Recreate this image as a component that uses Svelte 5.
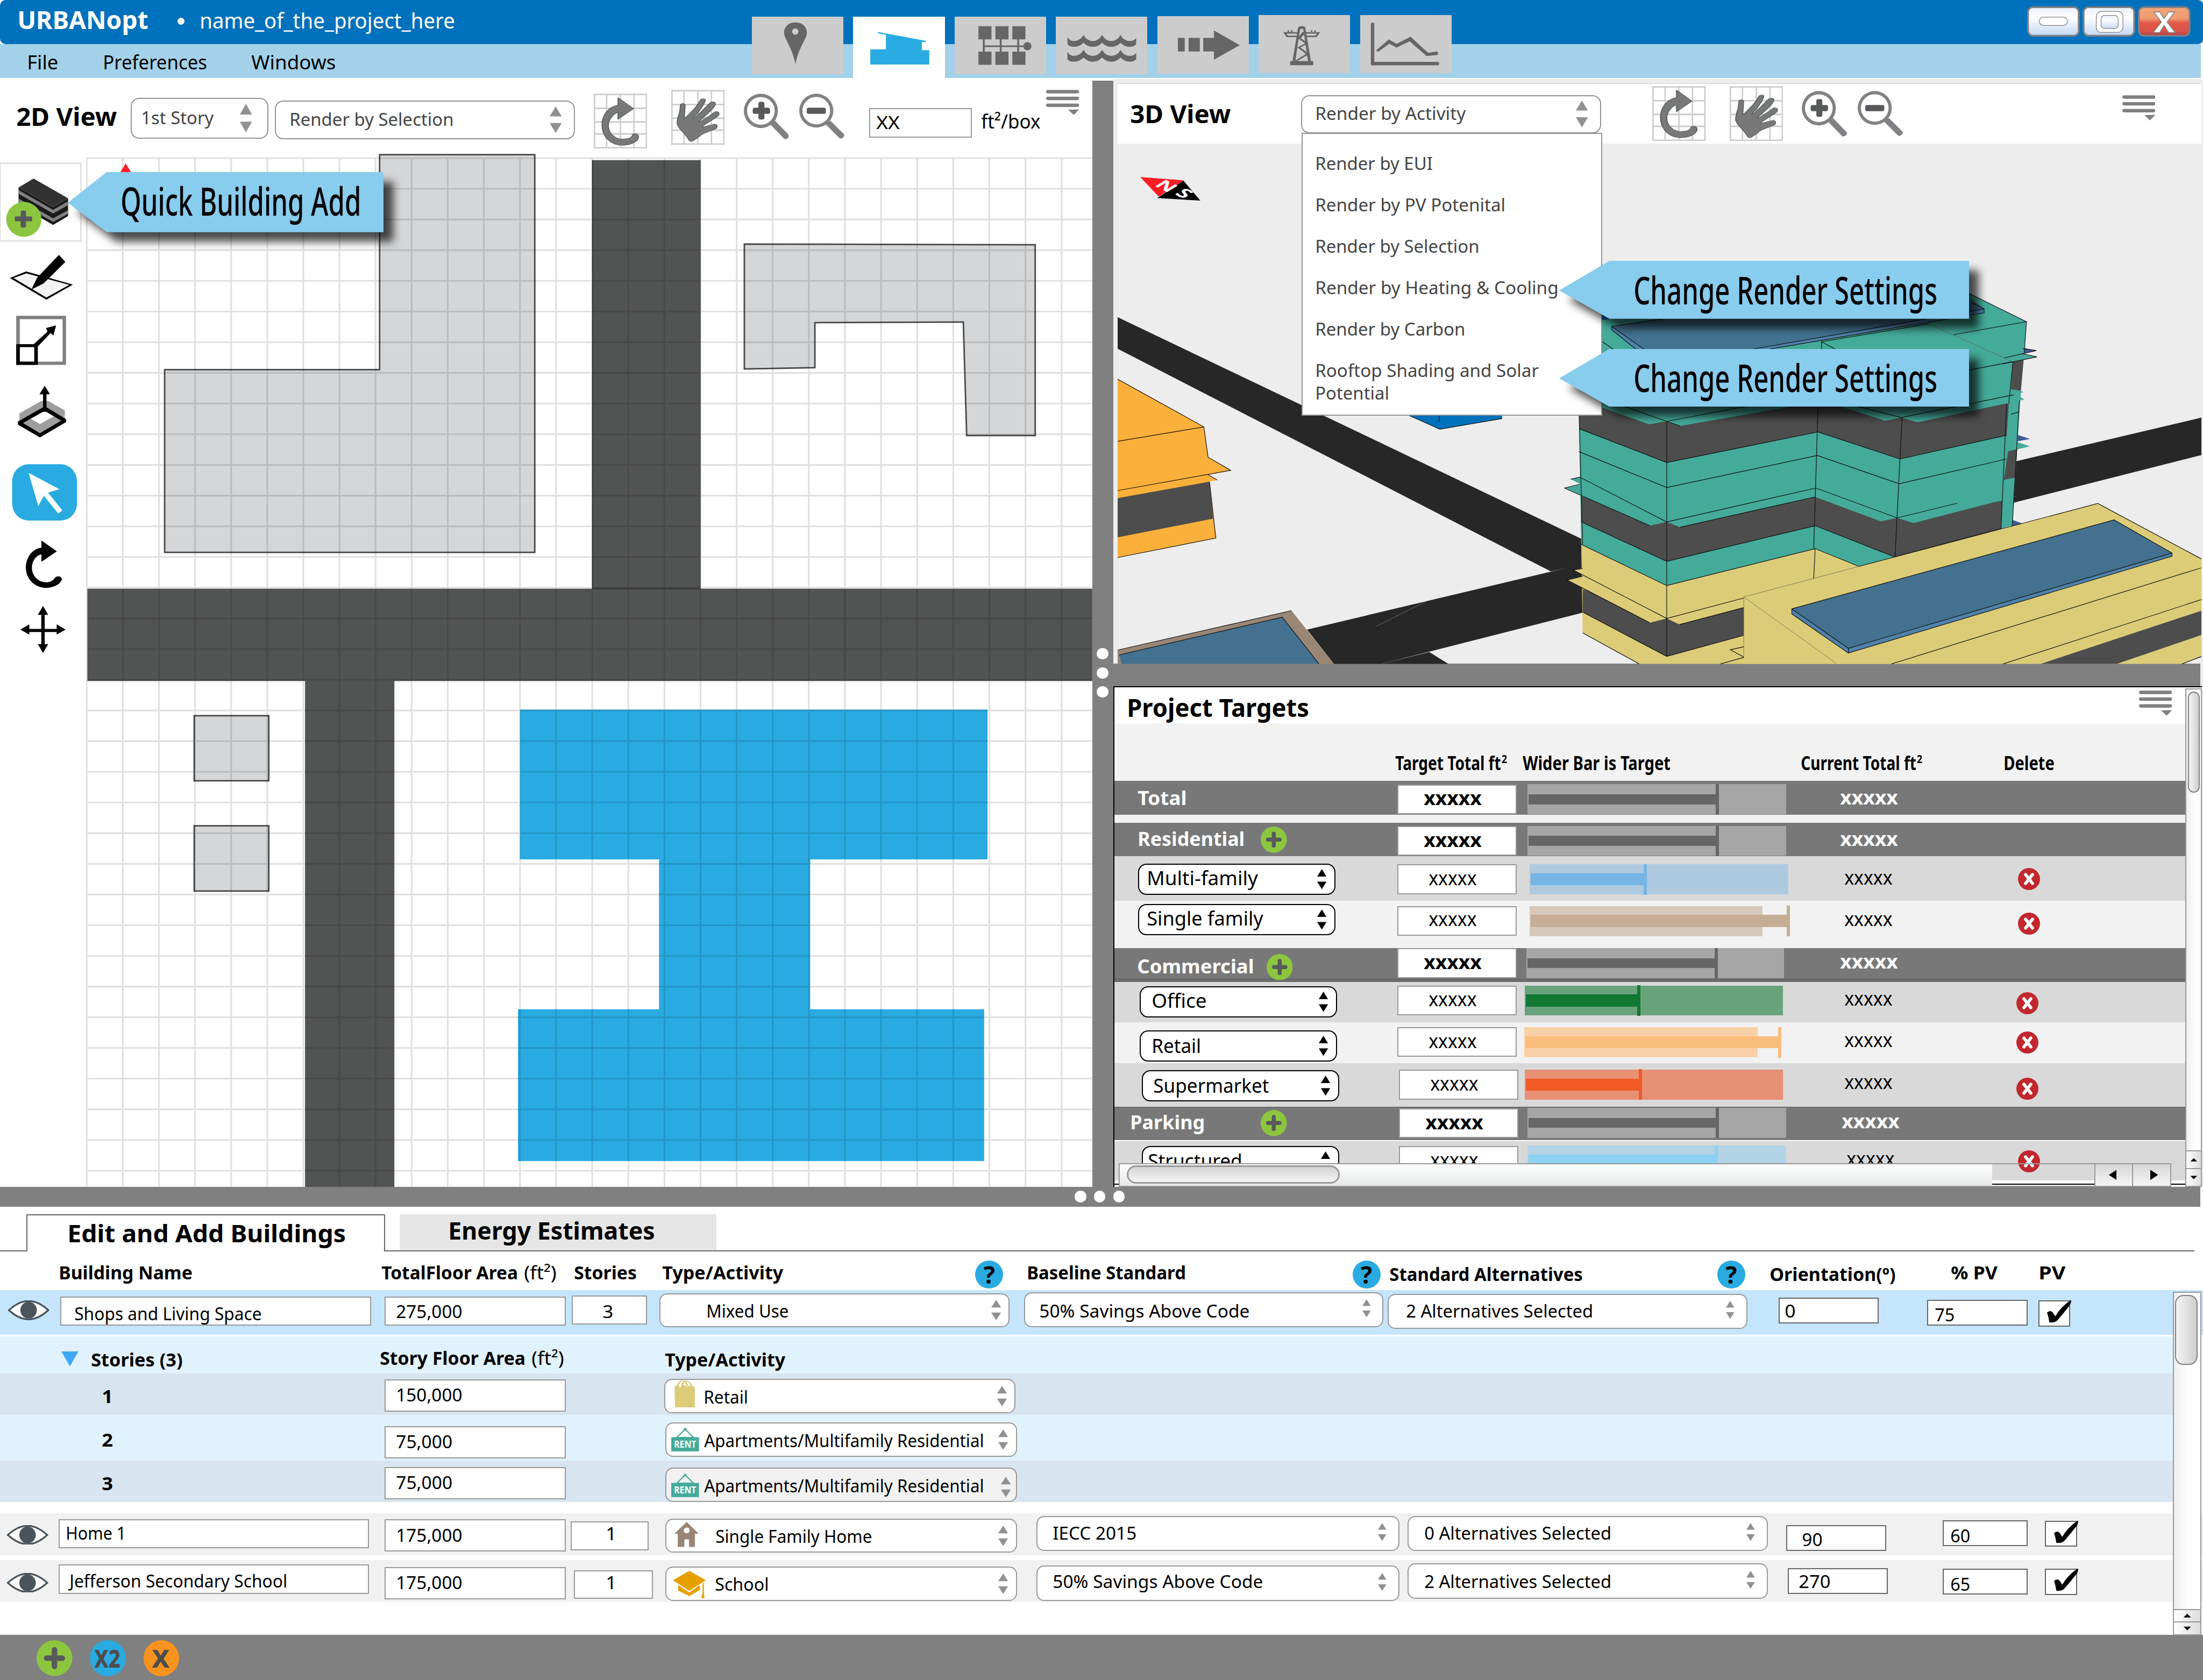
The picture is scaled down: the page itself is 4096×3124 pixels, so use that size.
<script>
  // Stretches a label to the given width so its metrics are independent of the installed font.
  function fit(node, width) {
    const root = node.closest('.app');
    const k = root.getBoundingClientRect().width / 1568;
    const natural = node.getBoundingClientRect().width / k;
    const target = width + 1.2;
    node.style.transform = `translateX(-0.3px) scaleX(${target / natural})`;
    node.style.marginRight = `${target - natural}px`;
  }

  const gridX = Array.from({ length: 28 }, (_, i) => 6 + i * 53.75);
  const gridY = Array.from({ length: 34 }, (_, i) => 20 + i * 45.68);
  const gridPath =
    gridX.map((x) => `M${x} 19V1552`).join('') + gridY.map((y) => `M5 ${y}H1503`).join('');

  const renderModes = [
    ['Render by EUI', 82.5],
    ['Render by PV Potenital', 134.3],
    ['Render by Selection', 115.7],
    ['Render by Heating & Cooling', 172],
    ['Render by Carbon', 105.7]
  ];

  const targets = [
    { id: 'total', head: 'Total', w: 33.8, bar: [184, 134, 'gray'] },
    { id: 'residential', head: 'Residential', w: 75, add: true, bar: [184, 134, 'gray'] },
    { id: 'multi', pick: 'Multi-family', w: 77.9, bar: [184.2, 81.5, 'sky'] },
    { id: 'single', pick: 'Single family', w: 81.7, bar: [166, 183, 'tan'] },
    { id: 'commercial', head: 'Commercial', w: 82, add: true, bar: [183.6, 134, 'gray'] },
    { id: 'office', pick: 'Office', w: 38, bar: [183.8, 80.3, 'green'] },
    { id: 'retail', pick: 'Retail', w: 34, bar: [166.2, 180.7, 'peach'] },
    { id: 'super', pick: 'Supermarket', w: 81.2, bar: [183.8, 81.3, 'red'] },
    { id: 'parking', head: 'Parking', w: 52, add: true, bar: [184, 134, 'gray'] },
    { id: 'structured', pick: 'Structured', w: 66, bar: [184, 133, 'aqua'] }
  ];

  const buildings = [
    {
      id: 'shops',
      name: ['Shops and Living Space', 132.2],
      area: ['275,000', 46],
      stories: '3',
      type: ['Mixed Use', 57.5],
      base: ['50% Savings Above Code', 148.6],
      alt: ['2 Alternatives Selected', 132],
      orient: ['0', 6.6],
      pv: ['75', 13],
      floors: [
        { id: 'f1', n: '1', area: ['150,000', 46], icon: 'bag', type: ['Retail', 30.5] },
        { id: 'f2', n: '2', area: ['75,000', 39], icon: 'rent', type: ['Apartments/Multifamily Residential', 198] },
        { id: 'f3', n: '3', area: ['75,000', 39], icon: 'rent', type: ['Apartments/Multifamily Residential', 198] }
      ]
    },
    {
      id: 'home',
      name: ['Home 1', 41.7],
      area: ['175,000', 46],
      stories: '1',
      icon: 'house',
      type: ['Single Family Home', 110.3],
      base: ['IECC 2015', 58.5],
      alt: ['0 Alternatives Selected', 132],
      orient: ['90', 13.5],
      pv: ['60', 13]
    },
    {
      id: 'school',
      name: ['Jefferson Secondary School', 153.8],
      area: ['175,000', 46],
      stories: '1',
      icon: 'cap',
      type: ['School', 37.2],
      base: ['50% Savings Above Code', 148.6],
      alt: ['2 Alternatives Selected', 132],
      orient: ['270', 21.5],
      pv: ['65', 13]
    }
  ];
</script>

{#snippet label(text, width)}<span class="fit" use:fit={width}>{text}</span>{/snippet}

{#snippet value(pair)}{@render label(pair[0], pair[1])}{/snippet}

{#snippet arrows()}
  <svg class="arrows" viewBox="0 0 10 24" preserveAspectRatio="none"><path d="M0 9L5 0L10 9ZM0 15H10L5 24Z" /></svg>
{/snippet}

{#snippet plus(cls)}
  <svg class="plus {cls}" viewBox="0 0 20 20">
    <circle cx="10" cy="10" r="10" fill="#8cc63f" />
    <path d="M5.6 10H14.4M10 5.4V14.6" stroke="#58595b" stroke-width="3.1" stroke-linecap="round" />
  </svg>
{/snippet}

{#snippet menuIcon()}
  <svg class="menuicon" viewBox="1374 654 93 184" preserveAspectRatio="none" fill="#808080">
    <rect x="1374" y="655" width="93" height="25" rx="5" ry="12" />
    <rect x="1374" y="704" width="93" height="25" rx="5" ry="12" />
    <rect x="1374" y="754" width="93" height="25" rx="5" ry="12" />
    <path d="M1436 799L1467 797L1452 837Z" />
  </svg>
{/snippet}

{#snippet viewTools()}
  <svg class="rotate" viewBox="102 679 150 400" preserveAspectRatio="none">
    <path d="M104 679V1079M138 679V1079M177 679V1079M215 679V1079M250 679V1079" stroke="#ccc" stroke-width="4" />
    <path d="M102 685H252M102 786H252M102 885H252M102 972H252M102 1073H252" stroke="#ccc" stroke-width="11" />
    <path class="glyph" d="M170 708L214 788L170 866L170 815C155 830 143 870 143 910C143 965 160 1008 182 1008C200 1008 209 1000 211 978C214 965 226 965 228 990C228 1030 205 1055 182 1055C148 1055 125 990 125 905C125 835 143 775 170 762Z" />
  </svg>
  <svg class="hand" viewBox="319 654 150 400" preserveAspectRatio="none">
    <path d="M321 654V1054M355 654V1054M394 654V1054M432 654V1054M467 654V1054" stroke="#ccc" stroke-width="4" />
    <path d="M319 660H469M319 761H469M319 860H469M319 947H469M319 1048H469" stroke="#ccc" stroke-width="11" />
    <path class="glyph" d="M375 1030C370 1030 368 1015 364 1000C355 965 340 940 336 905C334 880 338 850 342 820C344 800 344 775 345 762C347 750 357 752 358 765C358 800 356 830 356 860C362 850 370 830 375 815C385 790 395 755 401 727C404 714 416 716 415 730C411 765 400 800 393 825C385 845 381 855 380 860C385 858 392 840 400 820C410 795 420 770 428 748C434 735 444 742 443 758C440 785 425 820 412 850C404 868 398 880 397 888C405 880 415 860 425 845C434 830 440 812 445 811C455 812 455 832 450 845C440 868 425 885 415 905C409 915 407 918 408 924C415 918 430 910 440 903C449 902 449 920 446 935C435 950 420 960 408 975C398 990 385 1025 375 1030Z" />
  </svg>
  <svg class="zin" viewBox="523 680 127 333" preserveAspectRatio="none" fill="#808184">
    <path fill-rule="evenodd" d="M523 806a48 125 0 1 0 96 0a48 125 0 1 0 -96 0ZM532 806a39 101 0 1 0 78 0a39 101 0 1 0 -78 0Z" />
    <path d="M597 903L611 877L650 982C650 1000 646 1014 637 1010Z" />
    <g fill="#58595b"><rect x="548" y="783" width="49" height="45" rx="6" ry="14" /><rect x="564" y="740" width="17" height="129" rx="6" ry="14" /></g>
  </svg>
  <svg class="zout" viewBox="679 680 127 333" preserveAspectRatio="none" fill="#808184">
    <path fill-rule="evenodd" d="M679 804a48 123 0 1 0 96 0a48 123 0 1 0 -96 0ZM688 804a39 100 0 1 0 78 0a39 100 0 1 0 -78 0Z" />
    <path d="M753 903L767 877L806 978C806 996 801 1010 793 1006Z" />
    <rect x="700" y="783" width="54" height="45" rx="6" ry="14" fill="#58595b" />
  </svg>
{/snippet}

{#snippet typeIcon(kind)}
  {#if kind === 'bag'}
    <svg class="ticon bag" viewBox="1025 610 32 90" preserveAspectRatio="none">
      <path d="M1025 633L1029 625L1034 633L1039 625L1044 633L1050 627L1056 633V698H1026Z" fill="#dccc78" />
      <path d="M1030 631C1032 606 1042 606 1045 631M1036 631C1038 606 1048 610 1051 631" fill="none" stroke="#dccc78" stroke-width="2.4" />
    </svg>
  {:else if kind === 'rent'}
    <svg class="ticon rent" viewBox="0 0 20 17">
      <circle cx="10" cy="1.1" r="1" fill="#44aa99" />
      <path d="M10 1L4 7H16Z" fill="none" stroke="#44aa99" stroke-width="0.8" />
      <rect y="6.8" width="20" height="10.2" fill="#44aa99" />
      <text x="10" y="14.2" text-anchor="middle" textLength="16" lengthAdjust="spacingAndGlyphs">RENT</text>
    </svg>
  {:else if kind === 'house'}
    <svg class="ticon house" viewBox="1025 1065 37 80" preserveAspectRatio="none" fill="#998675">
      <path fill-rule="evenodd" d="M1043.500 1065L1062 1103H1056V1145H1047V1121H1040V1145H1030V1103H1025ZM1039 1092a4.500 9 0 1 0 9 0a4.500 9 0 1 0 -9 0Z" />
    </svg>
  {:else if kind === 'cap'}
    <svg class="ticon cap" viewBox="1022 1221 50 88" preserveAspectRatio="none" fill="#e6a000">
      <path d="M1047 1221L1072 1251L1047 1285L1022 1251Z" />
      <path d="M1030 1266L1047 1290L1063 1266V1282L1047 1302L1030 1284Z" />
      <path d="M1067 1262L1069 1258V1292L1070 1309H1065L1067 1292Z" />
    </svg>
  {/if}
{/snippet}

{#snippet help()}
  <span class="help">?</span>
{/snippet}

{#snippet vscroll(cls)}
  <div class="vscroll {cls}">
    <div class="vthumb"></div>
    <div class="vbtn"><svg viewBox="0 0 10 6"><path d="M1 5L5 1L9 5Z" /></svg></div>
    <div class="vbtn"><svg viewBox="0 0 10 6"><path d="M1 1L5 5L9 1Z" /></svg></div>
  </div>
{/snippet}

<div class="app">
  <header>
    <div class="titlebar">
      <b class="brand">{@render label('URBANopt', 92)}</b>
      <i class="dot"></i>
      <span class="project">{@render label('name_of_the_project_here', 180.5)}</span>
      <svg class="winbtns" viewBox="107 43 1194 225">
        <defs>
          <linearGradient id="glass" x2="0" y2="1"><stop offset="0" stop-color="#e8eefb" /><stop offset=".35" stop-color="#fff" /><stop offset="1" stop-color="#c3d7f4" /></linearGradient>
          <linearGradient id="close" x2="0" y2="1"><stop offset="0" stop-color="#f4a67c" /><stop offset=".4" stop-color="#ee9a70" /><stop offset=".55" stop-color="#e45748" /><stop offset=".85" stop-color="#d9534a" /><stop offset="1" stop-color="#b03a42" /></linearGradient>
        </defs>
        <g stroke="#808184" stroke-width="13">
          <rect x="116" y="52" width="369" height="208" rx="36" fill="url(#glass)" />
          <rect x="521" y="52" width="368" height="208" rx="36" fill="url(#glass)" />
          <rect x="923" y="52" width="369" height="208" rx="36" fill="url(#close)" />
        </g>
        <g stroke="#808080" stroke-width="5" fill="#fff">
          <rect x="198" y="125" width="205" height="60" rx="30" />
          <rect x="613" y="83" width="194" height="152" rx="36" />
          <rect x="648" y="112" width="124" height="96" rx="24" fill="url(#glass)" />
          <path stroke-width="6" d="M1031 87H1076L1107 135L1138 87H1184L1129 160L1188 237H1140L1107 186L1074 237H1027L1087 160Z" />
        </g>
      </svg>
    </div>
    <nav class="menubar">
      <span class="m1">{@render label('File', 21)}</span>
      <span class="m2">{@render label('Preferences', 73)}</span>
      <span class="m3">{@render label('Windows', 59)}</span>
    </nav>
    <div class="modes">
      <svg viewBox="59 120 188 418" preserveAspectRatio="none"><path fill-rule="evenodd" d="M148 162C135 162 125 190 125 240C127 290 142 350 148.500 465C154 350 170 290 172 240C172 190 162 162 148 162ZM141.500 228a6.500 23 0 1 0 13 0a6.500 23 0 1 0 -13 0Z" /></svg>
      <svg class="active" viewBox="267.500 120 188 451" preserveAspectRatio="none"><path d="M319 231L417 296V306L409 303V363H424V468H303V357H335V251L319 241Z" /></svg>
      <svg class="t3" viewBox="475 120 189 421" preserveAspectRatio="none">
        <path d="M524 190h27v96h-27ZM559 190h27v96h-27ZM594 190h27v96h-27ZM524 376h27v96h-27ZM559 376h27v96h-27ZM594 376h27v96h-27ZM533 286h4v90h-4ZM568 286h4v90h-4ZM604 286h4v90h-4ZM535 330h88v12h-88Z" />
        <ellipse cx="625" cy="336" rx="8.500" ry="30" />
      </svg>
      <svg viewBox="683 120 188 418" preserveAspectRatio="none">
        <path id="wave" d="M707 268Q712 297 720 297Q733 297 740 253Q747 297 759 297Q771 297 778 253Q785 297 797 297Q809 297 816 253Q822 297 835 297Q843 297 848 275V320Q843 339 835 339Q824 339 816 309Q808 339 797 339Q786 339 778 309Q770 339 759 339Q748 339 740 309Q732 339 720 339Q711 339 707 320Z" />
        <use href="#wave" y="108" />
      </svg>
      <svg class="t5" viewBox="890 117 188 421" preserveAspectRatio="none"><path d="M932 276h14v99h-14ZM954 276h23v99h-23ZM984 276H1006V221L1059 329L1006 435V375H984Z" /></svg>
      <svg class="t6" viewBox="1098 111 189 421" preserveAspectRatio="none">
        <rect x="1163" y="447" width="48" height="31" rx="3" ry="9" />
        <path d="M1179 212Q1179 192 1187 192Q1195 192 1195 212L1199 300L1206 447H1200L1194 300L1190 212H1184L1180 300L1174 447H1168L1175 300Z" />
        <path d="M1149 236H1180V247H1156L1158 261H1179V272H1156ZM1225 236H1194V247H1218L1216 261H1195V272H1218ZM1158 222h3v16h-3ZM1165 222h3v16h-3ZM1206 222h3v16h-3ZM1213 222h3v16h-3Z" />
        <path d="M1189 232L1194 245L1185 280L1201 318L1184 348L1203 395L1178 447H1172L1196 395L1178 348L1194 318L1179 280Z" />
      </svg>
      <svg class="t7" viewBox="1306 111 189 421" preserveAspectRatio="none">
        <rect x="1328" y="167" width="7" height="312" rx="3" ry="10" /><rect x="1328" y="453" width="141" height="26" rx="4" ry="12" />
        <path d="M1339 368L1365 289L1381 321L1410 269L1446 387L1464 377Q1469 388 1465 403L1443 411L1408 303L1381 349L1366 320L1345 375Q1341 383 1339 368Z" />
      </svg>
    </div>
  </header>

  <main>
    <section class="plan">
      <div class="toolbar two">
        <b class="title">{@render label('2D View', 70.5)}</b>
        <div class="select s1">{@render label('1st Story', 50.5)}{@render arrows()}</div>
        <div class="select s2">{@render label('Render by Selection', 115.7)}{@render arrows()}</div>
        {@render viewTools()}
        <div class="scale">{@render label('XX', 15.500)}</div>
        <span class="unit">{@render label('ft²/box', 41)}</span>
        {@render menuIcon()}
      </div>
      <div class="work">
        <div class="tools">
          <svg class="k1" viewBox="0 17 625 257" preserveAspectRatio="none">
            <path fill="#fff" stroke="#e0e0e0" stroke-width="5" d="M0 19.500H594M0 255.500H594" />
            <path stroke="#e0e0e0" stroke-width="11" d="M0 17V258M588 17V258" />
            <path fill="#1a1a1a" d="M135 93V146L386 207L495 180V126L386 153Z" />
            <path fill="#808080" d="M135 101L386 161L495 135V147L386 172L135 112ZM135 127L386 187L495 162V173L386 198L135 138Z" />
            <path fill="#323232" d="M244 66L495 126L386 153L135 93Z" />
            <ellipse cx="173" cy="190" rx="128" ry="53" fill="#8cc63f" />
            <path fill="#58595b" d="M112 181H150V168Q150 163 162 163H177Q189 163 189 168V181H228Q234 181 234 188.500T228 196H189V210Q189 215 177 215H162Q150 215 150 210V196H112Q107 196 107 188.500T112 181Z" />
          </svg>
          <svg class="k2" viewBox="0 274 625 183" preserveAspectRatio="none">
            <path d="M190 347L530 387L337 433L72 367ZM192 353L100 367L337 426L502 388Z" fill-rule="evenodd" />
            <path fill="#f3f3f3" d="M192 353L100 367L337 426L502 388Z" />
            <path d="M428 297L475 318L345 372L315 384L228 402L270 366Z" />
          </svg>
          <svg class="k3" viewBox="0 457 625 208" preserveAspectRatio="none">
            <path fill="#808080" fill-rule="evenodd" d="M118 482H480V631H118ZM144 492V621H455V492Z" />
            <path fill-rule="evenodd" d="M118 568H245L345 530L335 519L408 511L388 542L368 534L275 575V631H118ZM144 577V621H249V577Z" />
          </svg>
          <svg class="k4" viewBox="0 665 625 230" preserveAspectRatio="none">
            <path fill="#9e9e9e" d="M141 779L300 741H350L471 770V800L290 845L141 805Z" />
            <path fill="#fff" d="M222 795L315 773H335L395 788L360 795L290 811Z" />
            <path fill-rule="evenodd" d="M130 804L313 760V721H287L325 695L363 721H338V760L481 797V805L290 852L130 813ZM167 808L290 839L445 801L336 774H313Z" />
          </svg>
          <svg class="k5" viewBox="0 895 625 238" preserveAspectRatio="none">
            <rect x="88" y="933" width="472" height="171" rx="120" ry="52" fill="#29abe2" />
            <path fill="#fff" d="M208 959L432 1009L349 1019L453 1073L424 1083L319 1029L278 1060Z" />
          </svg>
          <svg class="k6" viewBox="0 1133 625 202" preserveAspectRatio="none">
            <path d="M301 1164L413 1197L301 1229V1206C260 1210 232 1227 232 1247C232 1272 280 1291 335 1291C365 1291 385 1286 400 1277C420 1269 455 1274 449 1284C435 1298 385 1308 335 1308C250 1308 188 1280 188 1247C188 1215 235 1189 301 1186Z" />
          </svg>
          <svg class="k7" viewBox="0 1335 625 225" preserveAspectRatio="none">
            <path d="M313 1364L350 1391H325V1434H412V1420L477 1436L412 1451V1443H325V1480H350L313 1507L275 1480H300V1443H213V1451L148 1436L213 1420V1434H300V1391H275Z" />
          </svg>
        </div>
        <svg class="map" viewBox="5 12 1498 1540" preserveAspectRatio="none">
          <g fill="#525453"><rect x="759" y="23" width="161" height="638" /><rect x="7" y="661" width="1496" height="137.500" /><rect x="331" y="798" width="133" height="754" /></g>
          <path d="M759 661H920" stroke="#333" stroke-width="1.500" />
          <path d="M759 23V661" stroke="#333" stroke-width="1.500" />
          <g fill="#d5d6d8" stroke="#464646" stroke-width="2.200">
            <path d="M442 15H673V607H122V335H442Z" />
            <path d="M985 148L1418 149V433H1316L1311 264L1090 265V332L985 334Z" />
            <path d="M166 850H277V947H166ZM166 1014H277V1111H166Z" />
          </g>
          <path fill="#29abe2" d="M651 841H1347V1064H1083V1287H1342V1513H648V1287H858V1064H651Z" />
          <path d={gridPath} stroke="#000" stroke-opacity=".12" stroke-width="2.500" fill="none" />
          <path fill="#ff1d25" d="M64 28L56 41H72Z" />
        </svg>
      </div>
    </section>

    <div class="vsplit"><i></i><i></i><i></i></div>

    <div class="right">
      <section class="scene">
        <div class="toolbar three">
          <b class="title">{@render label('3D View', 70.5)}</b>
          <div class="select s3">
            {@render label('Render by Activity', 106)}{@render arrows()}
            <ul class="dropdown">
              {#each renderModes as [text, w]}<li>{@render label(text, w)}</li>{/each}
              <li class="last">{@render label('Rooftop Shading and Solar', 158)}<br />{@render label('Potential', 51.5)}</li>
            </ul>
          </div>
          {@render viewTools()}
          {@render menuIcon()}
        </div>
        <svg class="stage" viewBox="32 -576 1534 2060" preserveAspectRatio="none">
          <g fill="#272727">
            <path d="M32 111L690 990V1090L645 1117L32 236Z" />
            <path d="M300 1347L690 1088V1280L405 1483H338Z" />
            <path d="M1300 683L1566 508V656L1300 845Z" />
            <path d="M405 1483L473 1436L500 1483Z" />
          </g>
          <path class="ln faint" d="M397 1335L590 1065" />
          <path fill="#fbb03b" d="M32 356L154 545L160 665L192 717L160 735L173 755L162 762L171 985L32 1062Z" />
          <path fill="#4d4d4d" d="M32 827L162 762L167 908L32 982Z" />
          <path class="ln" d="M32 356L154 545L160 665L192 717L32 797M32 602L154 545M160 735L173 755M162 762L171 985L32 1062" />
          <path fill="#998675" d="M32 1428L278 1272L338 1483H32Z" />
          <path fill="#43718f" d="M34 1447L265 1298L317 1483H38Z" />
          <path class="ln" d="M32 1428L278 1272M34 1447L265 1298L317 1483" />
          <path fill="#0071bc" d="M443 498H576V512L488 554Z" /><path class="ln" d="M443 498L488 554L576 512M487 498V525" />
          <!-- mixed-use tower -->
          <path fill="#3d5a98" d="M1313 232L1332 243L1313 254ZM1296 396L1314 407L1296 418ZM1305 576L1323 593L1300 605ZM1297 912L1313 928L1297 940Z" />
          <path fill="#44aa99" d="M685 450L717 122L1100 -60L1237 17L1318 129L1309 450L1298 935L1133 1060L1081 1097L1019 1027L809 1173L688 1010L685 552Z" />
          <path fill="#44aa99" d="M1310 255L1333 268L1300 288ZM1303 603L1323 622L1292 642Z" />
          <path fill="#dccc78" d="M1294 416L1310 428L1294 436Z" />
          <path fill="#4d4d4d" d="M1299 288L1314 280L1310 402L1296 396ZM1292 642L1305 632L1302 745L1286 755Z" />
          <path fill="#4d4d4d" d="M685 450L809 523L1023 440L1141 510L1293 452L1290 578L1139 672L1023 565L809 686L685 552Z" />
          <path fill="#44aa99" d="M717 410L1296 400L1315 437L1164 527L1141 508L1118 521L1056 465H985L828 541L809 523L784 535L717 468Z" />
          <path fill="#4d4d4d" d="M688 820L809 921L1019 822L1135 905L1284 837L1282 947L1132 1060L1019 936L809 1077L688 921Z" />
          <path fill="#44aa99" d="M673 752L686 744L700 790ZM664 787L686 772L809 921L785 936ZM809 921L1010 792L1019 822L828 942ZM1019 822L1003 803L1020 787L1135 905L1112 919ZM1135 905L1240 830L1304 820L1158 926Z" />
          <path fill="#447391" d="M731 147L803 118L1240 40L1258 78L925 240H772Z" />
          <path fill="#4f82ab" d="M1258 78V94L955 237H925ZM731 147V160L765 237H778Z" />
          <path fill="#00579a" d="M717 98L731 117L717 122Z" />
          <path class="ln" d="M1237 17L1318 129L1215 180M1028 237V208L1180 137M1028 208L1047 237M1237 320L1298 287M731 147L803 118M731 147L778 240M731 147V160L765 237M925 240L1258 78V94L955 237M1240 52L1258 78M718 208L733 237" />
          <path class="ln faint2" d="M1180 137L1298 287" />
          <path class="ln" d="M1313 235L1332 243L1287 272M1312 255L1333 268L1285 296M1299 286L1293 452M1318 129L1315 250" />
          <path class="ln" d="M750 465L809 523L985 430M1060 450L1141 508L1300 418M809 523L828 541M664 787L686 772M673 752L686 744L809 921L1020 787L1135 905L1220 847M664 787L785 936M828 942L1019 822M685 643L809 785L1022 658L1138 770L1290 672M685 552L809 686L1023 565L1139 672L1290 578M688 921L809 1077L1019 936L1132 1060L1282 947M685 500L690 1010M809 523V1173M1023 465L1017 1027M1142 508L1132 1060M1290 455L1282 947M1296 495L1308 485M1308 440L1298 935" />
          <!-- retail base -->
          <path fill="#dccc78" d="M688 1010L809 1173L1019 1027L1081 1097L1133 1060V1483H770L690 1360ZM677 1112L690 1104V1130ZM668 1151L690 1136V1182Z" />
          <path fill="#4d4d4d" d="M690 1187L809 1303L918 1260V1370L809 1453L690 1278Z" />
          <path fill="#dccc78" d="M668 1151L690 1136L809 1303L785 1320ZM809 1303L918 1222V1260L827 1327Z" />
          <path class="ln" d="M688 1010L809 1173L1019 1027L1081 1097M690 1105L677 1112L809 1303L918 1222M690 1136L668 1151L785 1320M827 1327L918 1260M690 1278L809 1453L918 1370M690 1360L770 1483M809 1173V1453M1019 1027L1017 1145M918 1415L899 1427L935 1481M885 1483L918 1457" />
          <path fill="#dccc78" d="M918 1218L1419 848L1566 1068V1453L1538 1483H918Z" />
          <path fill="#4d4d4d" d="M1338 1483L1566 1272V1368L1446 1483Z" />
          <path fill="#43718f" d="M986 1265L1442 913L1524 1044L1066 1421Z" />
          <path fill="#4f82ab" d="M986 1265L1066 1421L1524 1044V1057L1066 1440L986 1285Z" />
          <path class="ln" d="M1081 1097L1419 848L1566 1068M986 1265L1442 913L1524 1044V1057L1066 1440L986 1285ZM986 1265L1066 1421L1524 1044M1066 1421V1440M1127 1483L1566 1102M1285 1483L1566 1228M1538 1483L1566 1453" />
          <path class="ln faint2" d="M918 1218L1081 1097M918 1218L1049 1481M918 1218V1460" />
        </svg>
        <svg class="compass" viewBox="811 125.500 44 18">
          <path fill="#ff1d25" d="M811.400 126L842.100 128.300L824.500 139.900Z" /><path d="M842.100 128.500L854.200 142.700L823.500 140.900Z" />
          <text transform="matrix(1.250 .62 -1 .62 821 132)">N</text>
          <text transform="matrix(1.250 .62 -1 .62 835.500 138)">S</text>
        </svg>
      </section>

      <div class="hsplit"></div>

      <section class="targets">
        <div class="thead">
          <b>{@render label('Project Targets', 128.500)}</b>
          {@render menuIcon()}
        </div>
        <div class="tcols">
          <b class="c1">{@render label('Target Total ft', 74)}<sup>2</sup></b>
          <b class="c2">{@render label('Wider Bar is Target', 104)}</b>
          <b class="c3">{@render label('Current Total ft', 81)}<sup>2</sup></b>
          <b class="c4">{@render label('Delete', 35)}</b>
        </div>
        {#each targets as t}
          <div class="trow {t.id}" class:group={t.head}>
            <div class="tname">
              {#if t.head}
                <b>{@render label(t.head, t.w)}</b>
                {#if t.add}{@render plus('tadd')}{/if}
              {:else}
                <div class="pick">{@render label(t.pick, t.w)}{@render arrows()}</div>
              {/if}
            </div>
            <div class="val">{@render label('xxxxx', t.head ? 40 : 33)}</div>
            <div class="bar {t.bar[2]}">
              <i class="bg" style:width="{t.bar[0]}px"></i>
              <i class="fg" style:width="{t.bar[1]}px"></i>
              <i class="mark" style:margin-left="{t.bar[1]}px"></i>
            </div>
            <div class="cur">{@render label('xxxxx', t.head ? 40 : 33)}</div>
            {#if t.pick}
              <svg class="del" viewBox="0 0 16 16"><circle cx="8" cy="8" r="8" fill="#c1272d" /><path d="M5.500 4.800L10.500 11.200M10.500 4.800L5.500 11.200" stroke="#fff" stroke-width="2.300" stroke-linecap="round" /></svg>
            {/if}
          </div>
        {/each}
        <div class="tfoot"></div>
        <div class="hscroll">
          <div class="htrack"><div class="hthumb"></div></div>
          <div class="hgap"></div>
          <div class="hbtn prev"><svg viewBox="0 0 6 8"><path d="M6 0V8L0 4Z" /></svg></div>
          <div class="hbtn next"><svg viewBox="0 0 6 8"><path d="M0 0V8L6 4Z" /></svg></div>
        </div>
        {@render vscroll('tv')}
      </section>
    </div>
  </main>

  <div class="bsplit"><i></i><i></i><i></i></div>

  <section class="editor">
    <div class="tabs">
      <div class="lead"></div>
      <div class="tab on"><b>{@render label('Edit and Add Buildings', 197)}</b></div>
      <div class="mid"></div>
      <div class="tab off"><b>{@render label('Energy Estimates', 146)}</b></div>
      <div class="rest"></div>
    </div>
    <div class="cols">
      <b class="h1">{@render label('Building Name', 94)}</b>
      <b class="h2">{@render label('TotalFloor Area', 96)}<span class="thin">{@render label('(ft²)', 22)}</span></b>
      <b class="h3">{@render label('Stories', 43.500)}</b>
      <b class="h4">{@render label('Type/Activity', 85)}{@render help()}</b>
      <b class="h5">{@render label('Baseline Standard', 112)}{@render help()}</b>
      <b class="h6 low">{@render label('Standard Alternatives', 136.500)}{@render help()}</b>
      <b class="h7 low">{@render label('Orientation(º)', 88.500)}</b>
      <b class="h8">{@render label('% PV', 32)}</b>
      <b class="h9">{@render label('PV', 18)}</b>
    </div>
    {#each buildings as b}
      <div class="brow {b.id}">
        <svg class="eye" viewBox="0 0 30 14"><path d="M1 7Q15 -6 29 7Q15 20 1 7Z" fill="#fff" stroke="#4a545b" stroke-width="1.300" /><circle cx="15" cy="7" r="5.900" fill="#4a545b" /></svg>
        <div class="box name">{@render value(b.name)}</div>
        <div class="box area">{@render value(b.area)}</div>
        <div class="box stories">{@render label(b.stories, 6.500)}</div>
        <div class="box sel type">{@render typeIcon(b.icon)}{@render value(b.type)}{@render arrows()}</div>
        <div class="box sel base">{@render value(b.base)}{@render arrows()}</div>
        <div class="box sel alt">{@render value(b.alt)}{@render arrows()}</div>
        <div class="box dark orient">{@render value(b.orient)}</div>
        <div class="box dark pv">{@render value(b.pv)}</div>
        <div class="box dark check"><svg viewBox="1351 354 45 84" preserveAspectRatio="none"><path d="M1363 393Q1368 383 1371 394Q1373 402 1374 405Q1381 375 1395 352Q1395 366 1391 376Q1384 398 1377 417Q1373 427 1366 424Q1365 405 1363 393Z" /></svg></div>
      </div>
      {#if b.floors}
        <div class="fhead">
          <svg class="tri" viewBox="0 0 12 11" preserveAspectRatio="none"><path d="M0 0H12L6 11Z" fill="#3fa9f5" /></svg>
          <b class="g1">{@render label('Stories (3)', 64)}</b>
          <b class="g2">{@render label('Story Floor Area', 102.500)}<span class="thin">{@render label('(ft²)', 22)}</span></b>
          <b class="g3">{@render label('Type/Activity', 84.500)}</b>
        </div>
        {#each b.floors as f}
          <div class="brow floor {f.id}">
            <b class="no">{@render label(f.n, 6.800)}</b>
            <div class="box area">{@render value(f.area)}</div>
            <div class="box sel type">{@render typeIcon(f.icon)}{@render value(f.type)}{@render arrows()}</div>
          </div>
        {/each}
      {/if}
    {/each}
    {@render vscroll('ev')}
  </section>

  <footer>
    {@render plus('add')}
    <span class="dup">{@render label('X2', 17.500)}</span>
    <span class="rem">{@render label('X', 11.500)}</span>
  </footer>

  <div class="callout q1"><div>{@render label('Quick Building Add', 170)}</div></div>
  <div class="callout q2"><div>{@render label('Change Render Settings', 215)}</div></div>
  <div class="callout q3"><div>{@render label('Change Render Settings', 215)}</div></div>
</div>

<style>
  :global(body) { margin: 0; background: #fff; overflow: hidden; }
  .app {
    zoom: 2.612245; position: relative; width: 1568px; height: 1196px; overflow: hidden;
    display: flex; flex-direction: column; background: #fff; color: #000;
    font: 12.7px/20px "Noto Sans", "Open Sans", sans-serif;
  }
  .app :global(*) { box-sizing: border-box; }
  svg { display: block; flex: none; }
  .fit { display: inline-block; white-space: nowrap; transform-origin: 0 50%; flex: none; }
  b { font-weight: 700; }
  i { display: block; }

  /* header */
  header { display: grid; grid-template-rows: 31.2px 24.3px; height: 55.5px; flex: none; }
  .titlebar { grid-area: 1 / 1; background: #0071bc; border-radius: 4px; display: flex; color: #fff; margin-right: -.5px; }
  .brand { font-size: 17.6px; margin: 3.8px 0 0 12.600px; }
  .dot { width: 5px; height: 5px; border-radius: 50%; background: #fff; margin: 12.800px 0 0 20.500px; }
  .project { font-size: 15.500px; margin: 4.500px 0 0 11.200px; }
  .winbtns { width: 117px; height: 22px; margin: 4.200px 9.200px 0 auto; }
  .menubar { grid-area: 2 / 1; background: #a2d1e9; margin-right: 1.400px; display: flex; font-size: 14px; line-height: 24.300px; padding-top: 0.900px; }
  .m1 { margin-left: 19.600px; width: 54px; } .m2 { width: 105.500px; }
  .modes { grid-area: 1 / 1 / 3 / 2; z-index: 1; justify-self: start; display: flex; gap: 6.950px; align-items: flex-start; padding: 11.800px 0 0 535.100px; height: 55.500px; }
  .modes svg { width: 65.200px; height: 41px; background: #ccc; fill: #666; }
  .modes .active { height: 44.200px; background: #fff; fill: #29abe2; }
  .modes .t5 { margin-top: -.300px; }
  .modes .t6, .modes .t7 { margin-top: -.900px; }

  main { display: flex; height: 789.500px; flex: none; }
  .plan { width: 777.400px; flex: none; display: flex; flex-direction: column; }
  .toolbar { display: flex; align-items: flex-start; flex: none; position: relative; }
  .two { height: 53.100px; }
  .title { font-size: 17.600px; }
  .two .title { margin: 17.200px 0 0 12px; width: 81px; }
  .select { display: flex; align-items: center; border: 1px solid #949494; border-radius: 6px; background: #fff; color: #444; }
  .select > .arrows { width: 8.600px; height: 20.300px; fill: #919191; margin: 0 11px 0 auto; }
  .select > .fit { margin-top: -.800px; }
  .s1 { width: 98px; height: 29.200px; margin-top: 14.100px; padding-left: 7px; }
  .s2 { width: 213.300px; height: 27.500px; margin: 16.100px 0 0 4.800px; padding-left: 9.600px; }
  .s2 > .arrows { height: 18.900px; margin-right: 8.500px; }
  .rotate, .hand { width: 38px; height: 39.200px; }
  .zin, .zout { width: 32.100px; height: 32.600px; }
  .glyph { fill: #787878; stroke: #4a5459; stroke-width: 2.200; }
  .two .rotate { margin: 11px 0 0 13.600px; }
  .two .hand { margin: 8.600px 0 0 17px; }
  .two .zin { margin: 11.100px 0 0 13.600px; }
  .two .zout { margin: 11.100px 0 0 7.500px; }
  .scale { width: 73.100px; height: 21px; margin: 21.600px 0 0 17.800px; border: 1px solid #999; display: flex; align-items: center; padding-left: 4.500px; }
  .scale .fit { margin-top: -.800px; }
  .unit { font-size: 13.800px; margin: 20.800px 0 0 6.700px; width: 46.200px; }
  .menuicon { width: 23.500px; height: 18px; }
  .two .menuicon { margin-top: 8.600px; }

  .work { display: flex; flex: 1; }
  .tools { width: 61.200px; padding-top: 7.100px; flex: none; }
  .tools svg { width: 61.200px; }
  .k1 { height: 60.240px; } .k2 { height: 42.900px; } .k3 { height: 48.760px; } .k4 { height: 53.910px; }
  .k5 { height: 55.790px; } .k6 { height: 47.350px; } .k7 { height: 52.740px; }
  .map { width: 716.200px; height: 736.400px; }

  .vsplit { width: 15.100px; background: #808080; margin-top: 1.800px; padding: 404px 0 0 3.300px; flex: none; }
  .vsplit i, .bsplit i { width: 8.200px; height: 8.200px; border-radius: 50%; background: #fff; }
  .vsplit i { margin-bottom: 5.400px; }
  .right { flex: 1; margin-top: .900px; background: #ededed; display: flex; flex-direction: column; position: relative; }
  .scene { height: 416px; position: relative; background: #ededed; padding: 2.800px 1px 0 2.800px; }
  .three { height: 42.900px; background: #fff; border-top: .500px solid #ccc; }
  .three .title { margin: 11.100px 0 0 9.500px; width: 121.300px; }
  .s3 { width: 213.600px; height: 27px; margin-top: 8.200px; padding-left: 9.500px; position: relative; z-index: 2; }
  .s3 > .arrows { height: 19px; margin-right: 8.500px; }
  .dropdown { position: absolute; left: -.500px; top: 26px; width: 214px; height: 201.300px; margin: 0; padding: 11.300px 0 0 9.300px; border: 1px solid #949494; background: #fff; list-style: none; }
  .dropdown li { height: 29.430px; line-height: 20px; }
  .dropdown .last { line-height: 16px; padding-top: 2px; }
  .three .rotate { margin: 1.700px 0 0 36.500px; }
  .three .hand { margin: 1.700px 0 0 17px; }
  .three .zin { margin: 5px 0 0 13.400px; }
  .three .zout { margin: 5px 0 0 7.500px; }
  .three .menuicon { margin: 8px 33px 0 auto; }
  .stage { width: 771.600px; height: 370.600px; }
  .stage .ln { fill: none; stroke: #111; stroke-width: .450px; vector-effect: non-scaling-stroke; }
  .stage .faint { stroke: #dedfa0; stroke-width: .250px; opacity: .6; }
  .stage .faint2 { stroke-width: .250px; stroke: #554; }
  .compass { position: absolute; left: 18.700px; top: 69.100px; width: 44px; height: 18px; }
  .compass text { font-size: 10.500px; font-weight: 700; fill: #fff; }

  .hsplit { height: 15.900px; background: #808080; margin-right: 2px; flex: none; }
  .targets { flex: 1; position: relative; background: #f2f2f2; border: .800px solid #000; border-width: .800px 0 0 .800px; overflow: hidden; margin-right: .600px; }
  .thead { height: 25.700px; background: #fff; display: flex; justify-content: space-between; padding-right: 21.500px; }
  .thead b { font-size: 17.600px; margin: 4.500px 0 0 9.300px; }
  .thead .menuicon { margin-top: 2.500px; }
  .tcols { height: 41.200px; display: flex; padding-top: 18.200px; font-size: 14px; }
  .tcols sup { font-size: 8px; line-height: 0; vertical-align: 5px; display: inline-block; transform: scaleX(.85); transform-origin: 0 50%; }
  .c1 { margin-left: 200.300px; width: 90.700px; } .c2 { width: 197.700px; } .c3 { width: 144.300px; }
  .trow {
    display: grid; grid-template-columns: 200.900px 91px 223px 128px 1fr; align-items: start;
    height: var(--h); background: #f2f2f2; font-size: 13.600px;
  }
  .group { background: #787878; color: #fff; font-weight: 700; }
  .tname { display: flex; align-items: flex-start; }
  .tname > b { margin: var(--sy) 0 0 var(--sx); }
  .tadd { width: 18.600px; height: 18.600px; margin: var(--ay) 0 0 var(--ax); }
  .pick { display: flex; align-items: center; width: 140.600px; height: 22.200px; border: 1.100px solid #000; border-radius: 6px; background: #fff; margin: var(--sy) 0 0 var(--sx); padding-left: var(--p, 6px); font-size: 14px; }
  .pick .fit { margin-top: var(--t, -2px); }
  .pick .arrows { width: 6.600px; height: 14.400px; margin: 0 5.800px 0 auto; }
  .val { width: 85.200px; height: 21.200px; border: 1px solid #999; background: #fff; color: #000; margin: var(--vy) 0 0 var(--vx, .300px); display: flex; align-items: center; justify-content: center; padding-right: 6px; }
  .val .fit { margin-top: -2px; }
  .group .val { padding-right: 5.500px; }
  .bar { display: grid; margin: var(--by) 0 0 var(--bx); height: 21.400px; align-items: center; justify-items: start; }
  .bar i { grid-area: 1 / 1; }
  .bg { height: 21.400px; } .fg { height: 8.600px; border-left: 1.100px solid transparent; background-clip: padding-box; }
  .group .fg { height: 7.200px; }
  .mark { width: 2.300px; height: 21.800px; }
  .gray .bg { background: #a6a6a6; } .gray .fg, .gray .mark { background-color: #666; }
  .sky .bg { background: #aecae0; } .sky .fg, .sky .mark { background-color: #76b5e4; }
  .tan .bg { background: #d7c9b9; } .tan .fg, .tan .mark { background-color: #c6ae96; }
  .green .bg { background: #68a37b; } .green .fg, .green .mark { background-color: #117733; }
  .peach .bg { background: #f8d1a8; } .peach .fg, .peach .mark { background-color: #f9bd7c; }
  .red .bg { background: #e79074; } .red .fg, .red .mark { background-color: #f15a24; }
  .aqua .bg { background: #b3d4e6; } .aqua .fg, .aqua .mark { background-color: #8dd2f4; }
  .cur { margin: calc(var(--vy) - 1px) 0 0 5px; } .group .cur { margin-left: 1.700px; }
  .del { width: 15.700px; height: 15.700px; margin: var(--dy) 0 0 var(--dx, 0px); }
  .total { --h: 23.900px; --sy: 2px; --sx: 16.900px; --vy: 2.400px; --by: 2.100px; --bx: 2.100px; margin-bottom: 5.700px; }
  .residential { --h: 24px; --sy: 1.500px; --sx: 16.700px; --ay: 2.900px; --ax: 11.300px; --vy: 2.300px; --by: 2.100px; --bx: 2.100px; }
  .multi { --h: 31.700px; --sy: 5.200px; --sx: 16.700px; --vy: 5.700px; --by: 5.500px; --bx: 3.400px; --dy: 8.500px; background: #d9d9d9; }
  .single { --h: 33.800px; --sy: 2.100px; --sx: 16.700px; --vy: 3.800px; --by: 3.500px; --bx: 3.400px; --dy: 8.500px; }
  .single .val .fit { margin-top: -3.200px; }
  .commercial { --h: 23.900px; --sy: 2.500px; --sx: 16.300px; --ay: 4.100px; --ax: 8.600px; --vy: 0px; --by: -.300px; --bx: 1.100px; border-bottom: 2.700px solid #6b6b6b; }
  .office { --h: 28.700px; --sy: 3px; --sx: 18px; --p: 7.800px; --t: -2px; --vy: 2.600px; --by: 2.400px; --bx: 0px; --dy: 7.200px; --dx: -1px; background: #d9d9d9; }
  .retail { --h: 29.200px; --sy: 5.800px; --sx: 18px; --p: 7.800px; --t: -.500px; --vy: 3.400px; --by: 3.400px; --bx: -.300px; --dy: 6.800px; --dx: -1px; }
  .super { --h: 30.900px; --sy: 5.100px; --sx: 19.300px; --p: 7.800px; --t: -1px; --vy: 4.700px; --vx: 1.500px; --by: 4.400px; --bx: 0px; --dy: 10.500px; --dx: -1px; background: #d9d9d9; }
  .super .cur { margin-top: 3px; }
  .parking { --h: 24.700px; --sy: 0px; --sx: 11.500px; --ay: 1.800px; --ax: 39.500px; --vy: .400px; --vx: 1.500px; --by: -.100px; --bx: 2.100px; border-top: 1px solid #6b6b6b; border-bottom: 1px solid #fff; }
  .parking .cur { margin-left: 2.800px; }
  .structured { --h: 27.800px; --sy: 3.400px; --sx: 19.300px; --p: 4px; --t: -1.500px; --vy: 3.200px; --vx: 1.500px; --by: 2.900px; --bx: 2.100px; --dy: 6.400px; background: #d9d9d9; }
  .structured .cur { margin-left: 6.500px; }
  .tfoot { height: 3px; background: #fff; border-bottom: 1px solid #000; }
  .hscroll { position: absolute; left: 3px; top: 338.800px; width: 749px; height: 17px; display: flex; border: 1px solid #999; }
  .htrack { width: 621px; background: linear-gradient(#fff, #e6e8e8); padding: 1px 0 0 5px; }
  .hthumb { width: 151.600px; height: 13px; border: 1.200px solid #999; border-radius: 7px; background: linear-gradient(#d4d4d4, #f4f4f4); }
  .hgap { flex: 1; }
  .hbtn { width: 27px; border-left: 1px solid #999; background: linear-gradient(#d6d6d6, #f6f6f6); display: grid; place-items: center; }
  .hbtn svg { width: 5.500px; height: 7.500px; }
  .prev svg { margin-right: 1.500px; }
  .next svg { margin-left: 4px; }

  .vscroll { position: absolute; display: flex; flex-direction: column; background: linear-gradient(90deg, #eee, #fff 60%); border: .800px solid #999; }
  .vthumb { border: .900px solid #808184; border-radius: 6px; background: linear-gradient(90deg, #f4f4f4, #cfcfcf); margin: 1.500px 1px auto; }
  .vbtn { border-top: .800px solid #999; background: linear-gradient(90deg, #fff, #dcdcdc); display: grid; place-items: center; }
  .vbtn svg { width: 6px; height: 3.600px; }
  .tv { right: 0; top: 1px; width: 12px; height: 355px; } .tv .vthumb { height: 72px; } .tv .vbtn { height: 12.800px; }
  .ev { left: 1546.500px; top: 60.400px; width: 20.300px; height: 244.600px; } .ev .vthumb { height: 50px; width: 16px; } .ev .vbtn { height: 9px; }
  .ev .vbtn svg { width: 9px; height: 4px; }

  .bsplit { height: 14px; margin-right: 2px; background: #808080; display: flex; gap: 5.500px; padding: 2.600px 0 0 764.900px; flex: none; }

  /* buildings editor */
  .editor { height: 304.800px; flex: none; position: relative; }
  .tabs { display: flex; height: 31.700px; padding-top: 5.300px; margin-right: 6px; font-size: 17.400px; }
  .tabs > div { border-bottom: 1px solid #666; }
  .lead { width: 18.800px; }
  .tabs .on { width: 255.400px; border: 1px solid #666; border-bottom: 0; padding: 2.500px 0 0 28.500px; }
  .mid { width: 10.400px; }
  .off { width: 225.400px; background: #e6e6e6; padding: 1.400px 0 0 34.500px; }
  .rest { flex: 1; }
  .cols { display: grid; grid-template-columns: 42px 229.700px 137px 62.800px 259.700px 258px 270.800px 129px 62.400px 1fr; height: 27.800px; font-size: 13px; padding-top: 5.200px; }
  .cols b, .fhead b { display: flex; align-items: flex-start; }
  .h1 { grid-column: 2; }
  .thin { font-weight: 400; margin-left: 4.500px; display: flex; font-size: 13px; }
  .low { margin-top: 1.200px; }
  .help { width: 20px; height: 20px; border-radius: 50%; background: #29abe2; font-size: 17px; line-height: 20px; text-align: center; margin: 1.300px 17.100px 0 auto; }
  .h5 .help { margin-right: 6.600px; } .h6 .help { margin: .200px 17.800px 0 auto; }
  .brow { display: grid; grid-template-columns: 41px 230px 134px 64px 259px 259px 273px 110px 80px 1fr; align-items: start; font-size: 12.600px; }
  .eye { width: 30px; height: 14px; margin: var(--y, 8.200px) 0 0 var(--x, 4.600px); }
  .box { display: flex; align-items: center; background: #fff; border: .900px solid #999; width: var(--w); height: var(--h); margin: var(--y) 0 0 var(--x); padding-left: var(--p); }
  .box > .fit { margin-top: calc(var(--t, 0px) * 2 + .600px); }
  .sel { border-radius: 5.500px; border-width: 1.100px; }
  .sel .arrows { width: 7px; height: 14.500px; fill: #919191; margin: 0 5.500px 0 auto; }
  .base .arrows, .alt .arrows { width: 6px; height: 12.800px; margin: 0 8.500px 2px auto; }
  .dark { border: 1px solid #666; }
  .check svg { width: 24.300px; height: 18.700px; margin: -1px -3px -1px -1px; }

  .shops { height: 31.500px; background: #c5e5fc; margin-bottom: 1.400px; }
  .shops .eye { --y: 7.300px; --x: 5.400px; }
  .shops .name { --x: 1.700px; --y: 4.600px; --w: 221.300px; --h: 20.700px; --p: 9.800px; --t: 1.500px; }
  .shops .area { --x: 2.800px; --y: 4.600px; --w: 129px; --h: 20.500px; --p: 7.500px; --t: .200px; }
  .shops .stories { --x: 2px; --y: 3.800px; --w: 53.400px; --h: 20.400px; --p: 21.500px; --t: 1px; }
  .shops .type { --x: .300px; --y: 2.200px; --w: 249.400px; --h: 24px; --p: 33px; --t: .200px; }
  .shops .base { --x: 1px; --y: 1.300px; --w: 255.800px; --h: 25px; --p: 10.300px; --t: .700px; }
  .shops .alt { --x: .500px; --y: 2.600px; --w: 256.200px; --h: 24.900px; --p: 12.800px; --t: -.600px; }
  .shops .orient { --x: 5.900px; --y: 5.300px; --w: 71.300px; --h: 18.200px; --p: 4px; }
  .shops .pv { --x: 1.800px; --y: 6.900px; --w: 71.400px; --h: 18.200px; --p: 5px; --t: 1.300px; }
  .shops .check { --x: .800px; --y: 7.100px; --w: 22.700px; --h: 18.700px; --p: 0; }

  .fhead { display: flex; height: 26.300px; background: #e1f2ff; font-size: 13px; margin-right: 21.500px; }
  .tri { width: 12.200px; height: 10.600px; margin: 10.600px 0 0 43.600px; }
  .g1 { margin: 6.300px 0 0 9.400px; width: 205.300px; } .g2 { margin-top: 5.200px; width: 203px; } .g3 { margin-top: 6.300px; }
  .floor { grid-template-columns: 72.700px 198.300px 198px 1fr; margin-right: 21.500px; }
  .no { font-size: 13px; margin: var(--n) 0 0 0; }
  .floor .no { grid-column: 2; }
  .floor .area { --x: 2.800px; --w: 129px; --h: 22.900px; --p: 7.500px; --t: -.600px; }
  .floor .type { --w: 250.300px; --h: 24.500px; --x: 4.500px; --p: 3.500px; }
  .f1 { --n: 6.300px; height: 29.600px; background: #d8e5f0; } .f1 .area { --y: 4.400px; } .f1 .type { --x: 3.600px; --y: 4px; --p: 6.800px; --t: .300px; }
  .f2 { --n: 7.600px; height: 32.500px; background: #e1f2ff; } .f2 .area { --y: 8px; } .f2 .type { --y: 5.100px; --t: .500px; }
  .f3 { --n: 6.200px; height: 29.600px; background: #d8e5f0; margin-bottom: 8px; } .f3 .area { --y: 4.700px; } .f3 .type { --y: 5.100px; --t: .300px; background: #f1f1f1; }
  .f3 .arrows { margin: 3px 3.500px 0 auto; }
  .ticon { margin-right: 4px; }
  .ticon.bag { width: 15px; height: 20px; margin: -3px 6px 0 0; }
  .rent { width: 19.800px; height: 16.800px; overflow: visible; }
  .rent text { font: 700 6.800px/1 "Noto Sans", sans-serif; fill: #fff; }
  .house { width: 17.400px; height: 17.800px; margin: -1.500px 12px 0 0; }
  .cap { width: 23.500px; height: 19.600px; margin: 1px 7px 0 0; }

  .home { height: 29.600px; background: #f1f1f1; margin-bottom: 3.600px; }
  .home .name { --x: .700px; --y: 4.200px; --w: 220.900px; --h: 20.700px; --p: 4.600px; --t: -.600px; }
  .home .area { --x: 2.800px; --y: 4.200px; --w: 129px; --h: 23px; --p: 7.500px; --t: -.400px; }
  .home .stories { --x: 1px; --y: 5.800px; --w: 55.800px; --h: 20.500px; --p: 24.500px; --t: -2px; }
  .home .type { --x: 4.500px; --y: 3.600px; --w: 250.300px; --h: 24.400px; --p: 5.700px; --t: .300px; }
  .home .base { --x: 9.700px; --y: 1.600px; --w: 258.400px; --h: 25.100px; --p: 11.200px; --t: -.500px; }
  .home .alt { --x: 15px; --y: 1.600px; --w: 256.300px; --h: 25.100px; --p: 11.500px; --t: -.500px; }
  .home .orient { --x: 11.300px; --y: 8.200px; --w: 71.400px; --h: 18.300px; --p: 10.700px; --t: 1px; }
  .home .pv { --x: 12.700px; --y: 4.900px; --w: 60.500px; --h: 18.200px; --p: 5px; --t: 1.700px; }
  .home .check { --x: 5.600px; --y: 5.100px; --w: 22.800px; --h: 18.700px; --p: 0; }

  .school { height: 29.800px; background: #f1f1f1; }
  .school .eye { --y: 9px; }
  .school .name { --x: .700px; --y: 3.100px; --w: 220.900px; --h: 21.100px; --p: 7.300px; --t: 1px; }
  .school .area { --x: 2.800px; --y: 4.900px; --w: 129px; --h: 22.900px; --p: 7.500px; --t: -.400px; }
  .school .stories { --x: 3.300px; --y: 7.300px; --w: 56.300px; --h: 20.300px; --p: 22.300px; --t: -1.800px; }
  .school .type { --x: 4.500px; --y: 4.600px; --w: 250.300px; --h: 24.500px; --p: 4.500px; --t: .300px; }
  .school .base { --x: 9.700px; --y: 3.800px; --w: 258.400px; --h: 25.300px; --p: 11.200px; --t: -1.300px; }
  .school .alt { --x: 15px; --y: 2.400px; --w: 256.300px; --h: 25.200px; --p: 11.500px; --t: 0px; }
  .school .orient { --x: 12.400px; --y: 5.800px; --w: 71.300px; --h: 18.200px; --p: 7.500px; }
  .school .pv { --x: 12.700px; --y: 6.200px; --w: 60.500px; --h: 18.200px; --p: 5px; --t: 1.500px; }
  .school .check { --x: 5.600px; --y: 6.200px; --w: 22.800px; --h: 18.700px; --p: 0; }

  footer { flex: 1; background: #808080; display: flex; padding: 3.800px 0 0 26.100px; gap: 12.500px; }
  .plus { flex: none; }
  .add, .dup, .rem { width: 25.500px; height: 25.500px; }
  .dup, .rem { border-radius: 50%; display: grid; place-content: center; color: #4d4d4d; font-weight: 800; font-size: 18px; background: #29abe2; }
  .rem { background: #f7931e; }

  .callout { position: absolute; z-index: 5; filter: drop-shadow(7px 7px 3px rgba(0, 0, 0, .7)); font-size: 28px; font-weight: 500; color: #000; }
  .callout div { background: #88ccee; display: flex; align-items: center; height: 100%; clip-path: polygon(0 51%, var(--n) 0, 100% 0, 100% 100%, var(--n) 100%); }
  .q1 { left: 48.300px; top: 122.400px; width: 224.700px; height: 42.900px; }
  .q1 div { --n: 27.700px; padding-left: 37.700px; }
  .q1 .fit { margin-top: -2px; }
  .q2, .q3 { left: 1109.800px; top: 185.700px; width: 291.800px; height: 41.200px; font-size: 27px; }
  .q2 div, .q3 div { --n: 35.700px; padding-left: 53px; }
  .q3 { top: 248.300px; }
</style>
